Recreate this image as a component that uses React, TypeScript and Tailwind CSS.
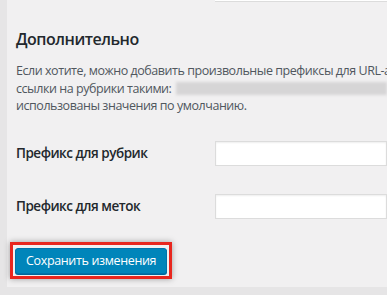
export default function App() {
  return (
    <div
      className="relative h-[295px] w-[387px] overflow-hidden bg-[#e6e5e6]"
      style={{ fontFamily: '"Open Sans", "Noto Sans", sans-serif' }}
    >
      <div className="ml-[7px] h-[287px] bg-[#f1f0f1] pl-[9px] text-[#23282d]">
        <div className="flex h-[2px]">
          <div className="ml-[199px] h-[2px] flex-1 border-b border-[#dcdcdc] bg-white" />
        </div>

        <h2 className="mt-[27px] text-[16px] font-semibold leading-[20px] tracking-[-0.5px]">Дополнительно</h2>

        <div className="mt-[13px] whitespace-nowrap text-[12.5px] leading-[17.5px] tracking-[-0.45px] text-[#50575e]">
          <p>Если хотите, можно добавить произвольные префиксы для URL-адресов</p>
          <p className="flex items-center">
            ссылки на рубрики такими:
            <span className="ml-[5px] inline-block h-[13px] w-[230px] bg-[#d6d5d6] blur-[1.5px]" />
          </p>
          <p>использованы значения по умолчанию.</p>
        </div>

        <div className="mt-[26px] flex items-center">
          <label className="w-[199px] shrink-0 text-[13.5px] font-semibold tracking-[-0.5px]">Префикс для рубрик</label>
          <input className="h-[25px] min-w-0 flex-1 border border-[#dcdcdc] bg-white shadow-[inset_0_1px_2px_rgba(0,0,0,0.07)]" />
        </div>

        <div className="mt-[28px] flex items-center">
          <label className="w-[199px] shrink-0 text-[13.5px] font-semibold tracking-[-0.5px]">Префикс для меток</label>
          <input className="h-[25px] min-w-0 flex-1 border border-[#dcdcdc] bg-white shadow-[inset_0_1px_2px_rgba(0,0,0,0.07)]" />
        </div>

        <div className="mt-[23px] ml-[-6px] inline-block border-[3px] border-[#e8261e] p-[2px] shadow-[0_0_6px_rgba(0,0,0,0.35)]">
          <button className="h-[26px] rounded-[3px] border border-[#0073aa] bg-[#0085ba] px-[10px] text-[12.5px] leading-[24px] tracking-[-0.35px] text-white shadow-[0_1px_0_#006799]">
            Сохранить изменения
          </button>
        </div>
      </div>
    </div>
  );
}
